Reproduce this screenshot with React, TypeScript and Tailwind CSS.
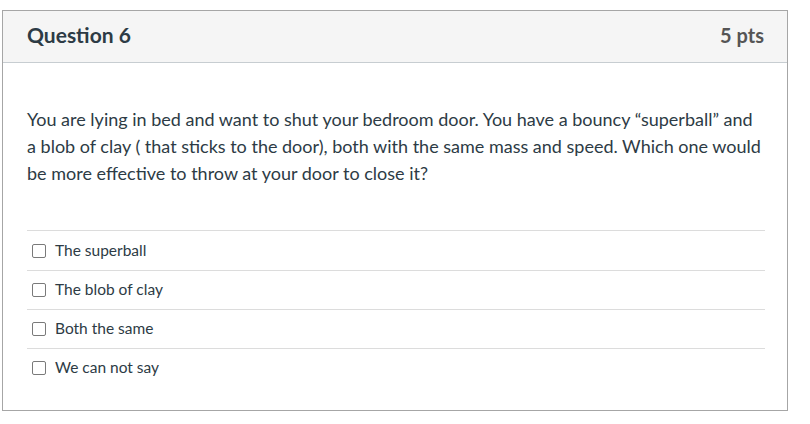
const answers = ["The superball", "The blob of clay", "Both the same", "We can not say"];

export default function App() {
    return (
        <div className="w-[810px] h-[424px] bg-white pt-[10px] pl-[2px]" style={{ fontFamily: "Lato, 'Open Sans', sans-serif" }}>
            <div className="w-[786px] h-[401px] border border-[#a6a6a6] flex flex-col">
                <div className="h-[52px] shrink-0 bg-[#f5f5f5] border-b border-[#c7cdd1] flex items-center justify-between pl-[24px] pr-[23px] pb-[4px]">
                    <h2 className="text-[21px] font-bold text-[#2d3b45]">Question 6</h2>
                    <span className="text-[20px] font-bold text-[#555]">5 pts</span>
                </div>

                <div className="px-[24px] pt-[43px]">
                    <p className="text-[18px] leading-[27px] text-[#2d3b45] pr-[2px]">
                        You are lying in bed and want to shut your bedroom door. You have a bouncy “superball” and a blob of clay ( that sticks to the door), both with the same mass and speed. Which one would be more effective to throw at your door to close it?
                    </p>

                    <div className="mt-[43px] mr-[-2px]">
                        {answers.map((a, i) => (
                            <div key={a} className={"border-t border-[#dcdcdc] flex items-center pl-[5px] gap-[9px] " + (i === 0 ? "h-[40px]" : "h-[39px]")}>
                                <span className="w-[14px] h-[14px] border border-[#7a7a7a] rounded-[2px] bg-white" />
                                <span className="text-[15.5px] text-[#2d3b45]">{a}</span>
                            </div>
                        ))}
                    </div>
                </div>
            </div>
        </div>
    );
}
